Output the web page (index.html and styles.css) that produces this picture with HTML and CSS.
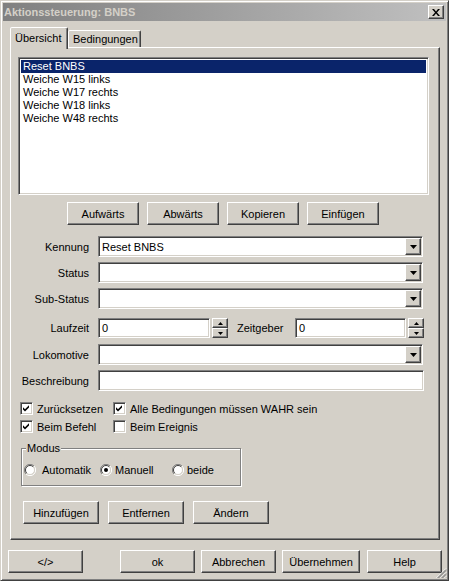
FILE: index.html
```html
<!DOCTYPE html>
<html>
<head>
<meta charset="utf-8">
<title>Aktionssteuerung: BNBS</title>
<link rel="stylesheet" href="styles.css">
</head>
<body>
<div class="window">
  <div class="titlebar">
    <span class="title">Aktionssteuerung: BNBS</span>
    <span class="close raised"><svg width="8" height="7" viewBox="0 0 8 7"><path d="M0 0h2l2 2.4L6 0h2L5 3.5 8 7H6L4 4.6 2 7H0l3-3.5z" fill="#000"/></svg></span>
  </div>
  <div class="tabs">
    <div class="tab active">Übersicht</div>
    <div class="tab inactive">Bedingungen</div>
  </div>
  <div class="panel">
    <div class="list sunken">
      <div class="item sel">Reset BNBS</div>
      <div class="item">Weiche W15 links</div>
      <div class="item">Weiche W17 rechts</div>
      <div class="item">Weiche W18 links</div>
      <div class="item">Weiche W48 rechts</div>
    </div>
    <div class="listbtns">
      <div class="btn raised w72">Aufwärts</div>
      <div class="btn raised w72">Abwärts</div>
      <div class="btn raised w72">Kopieren</div>
      <div class="btn raised w72">Einfügen</div>
    </div>

    <div class="frow first">
      <span class="lbl">Kennung</span>
      <div class="combo sunken"><span class="val">Reset BNBS</span><span class="ddbtn raised"><svg width="7" height="4" viewBox="0 0 7 4"><path d="M0 0h7L3.5 4z" fill="#000"/></svg></span></div>
    </div>
    <div class="frow">
      <span class="lbl">Status</span>
      <div class="combo sunken"><span class="val"></span><span class="ddbtn raised"><svg width="7" height="4" viewBox="0 0 7 4"><path d="M0 0h7L3.5 4z" fill="#000"/></svg></span></div>
    </div>
    <div class="frow">
      <span class="lbl">Sub-Status</span>
      <div class="combo sunken"><span class="val"></span><span class="ddbtn raised"><svg width="7" height="4" viewBox="0 0 7 4"><path d="M0 0h7L3.5 4z" fill="#000"/></svg></span></div>
    </div>
    <div class="frow spinrow">
      <span class="lbl">Laufzeit</span>
      <div class="edit sunken w112">0</div>
      <div class="spin">
        <span class="spinbtn raised"><svg width="5" height="3" viewBox="0 0 5 3"><path d="M0 3h5L2.5 0z" fill="#000"/></svg></span>
        <span class="spinbtn raised"><svg width="5" height="3" viewBox="0 0 5 3"><path d="M0 0h5L2.5 3z" fill="#000"/></svg></span>
      </div>
      <span class="lbl2">Zeitgeber</span>
      <div class="edit sunken w111">0</div>
      <div class="spin">
        <span class="spinbtn raised"><svg width="5" height="3" viewBox="0 0 5 3"><path d="M0 3h5L2.5 0z" fill="#000"/></svg></span>
        <span class="spinbtn raised"><svg width="5" height="3" viewBox="0 0 5 3"><path d="M0 0h5L2.5 3z" fill="#000"/></svg></span>
      </div>
    </div>
    <div class="frow lokrow">
      <span class="lbl">Lokomotive</span>
      <div class="combo sunken"><span class="val"></span><span class="ddbtn raised"><svg width="7" height="4" viewBox="0 0 7 4"><path d="M0 0h7L3.5 4z" fill="#000"/></svg></span></div>
    </div>
    <div class="frow">
      <span class="lbl">Beschreibung</span>
      <div class="edit sunken wfull"></div>
    </div>

    <div class="checkrow first">
      <label class="chk c1"><span class="box sunken"><svg width="9" height="9" viewBox="0 0 9 9"><path d="M1 3.2 3 5.2 7 1.2v2.4L3 7.6 1 5.6z" fill="#000"/></svg></span><span class="ctext">Zurücksetzen</span></label>
      <label class="chk"><span class="box sunken"><svg width="9" height="9" viewBox="0 0 9 9"><path d="M1 3.2 3 5.2 7 1.2v2.4L3 7.6 1 5.6z" fill="#000"/></svg></span><span class="ctext">Alle Bedingungen müssen WAHR sein</span></label>
    </div>
    <div class="checkrow">
      <label class="chk c1"><span class="box sunken"><svg width="9" height="9" viewBox="0 0 9 9"><path d="M1 3.2 3 5.2 7 1.2v2.4L3 7.6 1 5.6z" fill="#000"/></svg></span><span class="ctext">Beim Befehl</span></label>
      <label class="chk"><span class="box sunken"></span><span class="ctext">Beim Ereignis</span></label>
    </div>

    <div class="group">
      <span class="legend">Modus</span>
      <div class="radios">
        <label class="rad r1"><svg class="rb" width="12" height="12" viewBox="0 0 12 12"><circle cx="6" cy="6" r="4.5" fill="#fff"/><path d="M10 2A5.6 5.6 0 0 0 2 10" stroke="#808080" fill="none"/><path d="M2 10A5.6 5.6 0 0 0 10 2" stroke="#fff" fill="none"/><path d="M9.2 2.8A4.5 4.5 0 0 0 2.8 9.2" stroke="#404040" fill="none"/><path d="M2.8 9.2A4.5 4.5 0 0 0 9.2 2.8" stroke="#d4d0c8" fill="none"/></svg><span class="rtext t1">Automatik</span></label>
        <label class="rad r2"><svg class="rb" width="12" height="12" viewBox="0 0 12 12"><circle cx="6" cy="6" r="4.5" fill="#fff"/><path d="M10 2A5.6 5.6 0 0 0 2 10" stroke="#808080" fill="none"/><path d="M2 10A5.6 5.6 0 0 0 10 2" stroke="#fff" fill="none"/><path d="M9.2 2.8A4.5 4.5 0 0 0 2.8 9.2" stroke="#404040" fill="none"/><path d="M2.8 9.2A4.5 4.5 0 0 0 9.2 2.8" stroke="#d4d0c8" fill="none"/><circle cx="6" cy="6" r="2" fill="#000"/></svg><span class="rtext">Manuell</span></label>
        <label class="rad"><svg class="rb" width="12" height="12" viewBox="0 0 12 12"><circle cx="6" cy="6" r="4.5" fill="#fff"/><path d="M10 2A5.6 5.6 0 0 0 2 10" stroke="#808080" fill="none"/><path d="M2 10A5.6 5.6 0 0 0 10 2" stroke="#fff" fill="none"/><path d="M9.2 2.8A4.5 4.5 0 0 0 2.8 9.2" stroke="#404040" fill="none"/><path d="M2.8 9.2A4.5 4.5 0 0 0 9.2 2.8" stroke="#d4d0c8" fill="none"/></svg><span class="rtext">beide</span></label>
      </div>
    </div>

    <div class="panelbtns">
      <div class="btn raised w76">Hinzufügen</div>
      <div class="btn raised w76">Entfernen</div>
      <div class="btn raised w76">Ändern</div>
    </div>
  </div>

  <div class="footer">
    <div class="btn raised w75">&lt;/&gt;</div>
    <div class="btn raised w75 ok">ok</div>
    <div class="btn raised w75 g6">Abbrechen</div>
    <div class="btn raised w78 g6">Übernehmen</div>
    <div class="btn raised w75 g7">Help</div>
  </div>
  <svg class="grip" width="12" height="12" viewBox="0 0 12 12"><path d="M11 1.5 1.5 11M11 5.5 5.5 11M11 9.5 9.5 11" stroke="#fff" fill="none"/><path d="M11 2.5 2.5 11M11 3.5 3.5 11M11 6.5 6.5 11M11 7.5 7.5 11M11 10.5 10.5 11" stroke="#808080" fill="none"/></svg>
</div>
</body>
</html>
```

FILE: styles.css
```css
* { box-sizing: border-box; }
html, body { margin: 0; padding: 0; background: #d4d0c8; }
body {
  font-family: "Liberation Sans", Arial, sans-serif;
  font-size: 11px;
  color: #000;
}

.window {
  position: relative;
  width: 449px;
  height: 581px;
  background: #d4d0c8;
  border: 1px solid;
  border-color: #d4d0c8 #404040 #404040 #d4d0c8;
  box-shadow: inset 1px 1px #fff, inset -1px -1px #808080;
  padding: 2px;
}

.raised {
  background: #d4d0c8;
  border: 1px solid;
  border-color: #fff #404040 #404040 #fff;
  box-shadow: inset -1px -1px #808080;
}
.sunken {
  background: #fff;
  border: 1px solid;
  border-color: #808080 #fff #fff #808080;
  box-shadow: inset 1px 1px #404040, inset -1px -1px #d4d0c8;
}

/* title bar */
.titlebar {
  height: 18px;
  display: flex;
  align-items: center;
  padding-left: 1px;
  background: linear-gradient(to right, #808080, #c0c0c0);
}
.title {
  flex: 1;
  font-weight: bold;
  color: #d4d0c8;
  white-space: nowrap;
}
.close {
  width: 16px;
  height: 14px;
  margin-right: 2px;
  display: flex;
  align-items: center;
  justify-content: center;
}

/* tabs */
.tabs {
  position: relative;
  z-index: 1;
  display: flex;
  align-items: flex-end;
  height: 20px;
  margin: 6px 0 0 7px;
}
.tab {
  border: 1px solid;
  border-bottom: none;
  border-color: #fff #404040 transparent #fff;
  box-shadow: inset -1px 0 #808080;
  border-radius: 2px 2px 0 0;
  background: #d4d0c8;
  display: flex;
  align-items: center;
  white-space: nowrap;
}
.tab.active {
  width: 58px;
  height: 22px;
  margin-bottom: -2px;
  padding: 0 0 2px 4px;
}
.tab.inactive {
  width: 73px;
  height: 17px;
  padding-left: 4px;
}

/* panel */
.panel {
  position: relative;
  width: 430px;
  height: 493px;
  margin-left: 7px;
  border: 1px solid;
  border-color: #fff #404040 #404040 #fff;
  box-shadow: inset -1px -1px #808080;
}

.list {
  width: 411px;
  height: 138px;
  margin: 9px 0 0 7px;
  padding: 2px;
}
.item {
  height: 13px;
  line-height: 13px;
  padding-left: 2px;
  white-space: nowrap;
}
.item.sel { background: #0a246a; color: #fff; }

.btn {
  height: 23px;
  display: flex;
  align-items: center;
  justify-content: center;
  white-space: nowrap;
}
.w72 { width: 72px; }
.w75 { width: 75px; }
.w76 { width: 76px; }
.w78 { width: 78px; }

.listbtns {
  display: flex;
  gap: 8px;
  margin: 7px 0 0 56px;
}

/* form rows */
.frow {
  display: flex;
  align-items: center;
  height: 21px;
  margin-top: 5px;
}
.frow.first { margin-top: 11px; }
.frow.spinrow { height: 20px; margin-top: 9px; }
.frow.lokrow { margin-top: 6px; }
.lbl {
  width: 78px;
  text-align: right;
  margin-right: 9px;
  white-space: nowrap;
}
.combo {
  width: 325px;
  height: 21px;
  display: flex;
  align-items: center;
  padding-left: 3px;
}
.combo .val { flex: 1; white-space: nowrap; }
.ddbtn {
  width: 16px;
  height: 17px;
  margin-right: 1px;
  display: flex;
  align-items: center;
  justify-content: center;
}
.edit {
  height: 20px;
  display: flex;
  align-items: center;
  padding-left: 3px;
}
.w112 { width: 112px; }
.w111 { width: 111px; }
.wfull { width: 326px; height: 21px; }
.spin {
  width: 16px;
  height: 20px;
  margin-left: 2px;
  display: flex;
  flex-direction: column;
}
.spinbtn {
  height: 10px;
  display: flex;
  align-items: center;
  justify-content: center;
}
.lbl2 {
  width: 58px;
  margin-left: 9px;
  white-space: nowrap;
}

/* checkboxes */
.checkrow {
  display: flex;
  height: 13px;
  margin: 5px 0 0 9px;
}
.checkrow.first { margin-top: 11px; }
.chk {
  display: flex;
  align-items: center;
  white-space: nowrap;
}
.chk.c1 { width: 93px; }
.box {
  width: 13px;
  height: 13px;
  display: flex;
  align-items: center;
  justify-content: center;
}
.ctext { margin-left: 4px; }

/* group */
.group {
  position: relative;
  width: 220px;
  height: 38px;
  margin: 15px 0 0 10px;
  border: 1px solid #808080;
  box-shadow: inset 1px 1px #fff, 1px 1px 0 #fff;
}
.legend {
  position: absolute;
  top: -7px;
  left: 4px;
  padding: 0 1px;
  line-height: 13px;
  background: #d4d0c8;
}
.radios {
  display: flex;
  align-items: center;
  height: 12px;
  margin: 15px 0 0 2px;
}
.rad {
  display: flex;
  align-items: center;
  white-space: nowrap;
}
.rad.r1 { width: 76px; }
.rad.r2 { width: 72px; }
.rb { display: block; flex: none; }
.rtext { margin-left: 3px; }
.rtext.t1 { margin-left: 6px; }

.panelbtns {
  display: flex;
  gap: 9px;
  margin: 15px 0 0 12px;
}

/* footer */
.footer {
  display: flex;
  margin: 10px 0 0 5px;
}
.footer .ok { margin-left: 37px; }
.footer .g6 { margin-left: 6px; }
.footer .g7 { margin-left: 7px; }

.grip {
  position: absolute;
  right: 1px;
  bottom: 1px;
}
```
